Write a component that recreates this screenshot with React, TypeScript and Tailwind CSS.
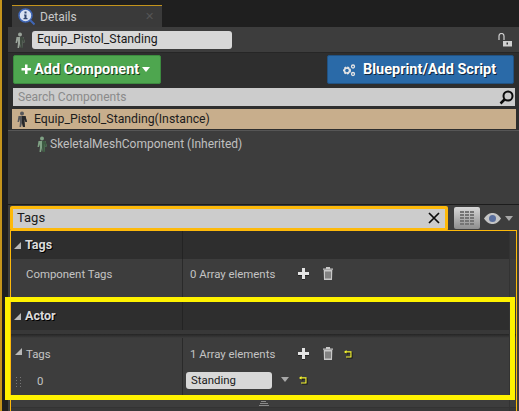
import React from 'react';

const font = { fontFamily: 'Roboto, "Liberation Sans", sans-serif' };

const Mannequin = ({ color = '#9aa39a', dark = '#3f4a40' }: { color?: string; dark?: string }) => (
  <svg width="14" height="16" viewBox="0 0 14 16">
    <circle cx="7" cy="2.5" r="2" fill={color} />
    <path d="M3.5 5h7l1.5 6h-1.5l-1-3v3l.5 5H8l-1-4-1 4H4.500l.5-5V8l-1 3H2.500z" fill={color} />
    <path d="M7 5h3.500l1.500 6h-1.500l-1-3v3l.5 5H8l-1-4z" fill={dark} />
  </svg>
);

const Plus = () => (
  <svg width="11" height="11" viewBox="0 0 11 11" className="drop-shadow-[0_1px_0_#222]">
    <path d="M4 0h3v4h4v3H7v4H4V7H0V4h4z" fill="#e4e4e4" />
  </svg>
);

const Trash = () => (
  <svg width="10" height="13" viewBox="0 0 10 13">
    <path d="M0 1.500h10v1.200H0zM3 0h4v1.500H3z" fill="#c8c8c8" />
    <path d="M.7 3h8.600L9 13H1zM2.500 4.500v7h1v-7zm2 0v7h1v-7zm2 0v7h1v-7z" fill="#c8c8c8" fillRule="evenodd" />
  </svg>
);

const Reset = () => (
  <svg width="8" height="8" viewBox="0 0 8 8" className="drop-shadow-[1px_1px_0_#111]">
    <path d="M2.500 0v3.800L0 1.900zM2.500 1.300H7.500V7.500H2V6.400h4.400V2.400H2.500z" fill="#f7f72e" />
  </svg>
);

const Caret = ({ color = '#a8a8a8', w = 8 }: { color?: string; w?: number }) => (
  <svg width={w} height="5" viewBox="0 0 8 5">
    <path d="M0 0h8L4 5z" fill={color} />
  </svg>
);

const Corner = () => (
  <svg width="7" height="7" viewBox="0 0 7 7">
    <path d="M7 0v7H0z" fill="#b8b8b8" />
  </svg>
);

const Category = ({ title }: { title: string }) => (
  <div className="flex h-[28px] shrink-0 bg-[#2e2e2e]">
    <div className="flex w-[172px] items-center gap-[4px] border-r border-[#232323] pl-[3px]">
      <Corner />
      <span className="text-[12.500px] font-bold text-[#dcdcdc] [text-shadow:1px_1px_0_#000]">{title}</span>
    </div>
    <div className="ml-auto w-[7px] bg-[#383838]" />
  </div>
);

export default function App() {
  return (
    <div style={font} className="relative flex h-[411px] w-[519px] flex-col overflow-hidden border-l-2 border-[#c4941c] bg-[#1f1f1f]">
      {/* Tab strip */}
      <div className="flex h-[27px] shrink-0 items-end pl-[10px]">
        <div className="flex h-[22px] w-[150px] items-center border-t border-[#c4941c] bg-[#3a3a3a] pl-[6px]">
          <svg width="17" height="18" viewBox="0 0 17 18">
            <circle cx="7.500" cy="7.500" r="6.500" fill="#d8e2f2" stroke="#3f66b5" strokeWidth="1.500" />
            <path d="M12 12l4.500 4.500" stroke="#3f66b5" strokeWidth="2" />
            <path d="M6.500 3.500h2v2h-2zM6 6.500h2.500V10h1v1.200h-4V10h1V7.500H6z" fill="#30466f" />
          </svg>
          <span className="ml-[5px] text-[12px] text-[#c8c8c8]">Details</span>
          <span className="ml-auto mr-[8px] text-[11px] leading-none text-[#555]">✕</span>
        </div>
      </div>

      <div className="ml-[6px] flex min-h-0 flex-1 flex-col bg-[#3d3d3d]">
        {/* Name row */}
        <div className="flex h-[25px] shrink-0 items-center pl-[5px] pr-[7px]">
          <Mannequin />
          <div className="ml-[5px] flex h-[18px] w-[200px] items-center rounded-[3px] bg-[#d8d8d8] pl-[5px] text-[12.250px] text-[#1a1a1a]">
            Equip_Pistol_Standing
          </div>
          <svg className="ml-auto" width="14" height="14" viewBox="0 0 14 14">
            <path d="M1 7V3a2.500 2.500 0 0 1 5 0v4" fill="none" stroke="#d0d0d0" strokeWidth="1.200" />
            <path d="M5 8h9v5.500H5z" fill="#d0d0d0" />
            <path d="M8.500 9.500h1.500v2H8.500z" fill="#333" />
          </svg>
        </div>

        {/* Components panel */}
        <div className="flex h-[78px] shrink-0 flex-col border-t border-[#262626] bg-[#2e2e2e] pl-[5px] pr-[4px] pt-[2px]">
          <div className="flex h-[29px] justify-between pr-[1px]">
            <div className="flex w-[148px] items-center rounded-[2px] border border-[#3c8a3f] bg-[#4ea64f] pl-[7px] text-[14.500px] font-bold text-white [text-shadow:1px_1px_0_#1c3c1c]">
              <svg width="11" height="11" viewBox="0 0 11 11">
                <path d="M4 .5h2.500V4H10v2.500H6.500V10H4V6.500H.5V4H4z" fill="#fff" />
              </svg>
              <span className="ml-[2px]">Add Component</span>
              <span className="ml-[3px]"><Caret color="#fff" /></span>
            </div>
            <div className="flex w-[187px] items-center rounded-[2px] border border-[#215282] bg-[#2a6aa8] pl-[14px] text-[14.500px] font-bold text-white [text-shadow:1px_1px_0_#10263c]">
              <svg width="14" height="14" viewBox="0 0 14 14">
                <circle cx="5" cy="7.500" r="3" fill="none" stroke="#e4e4e4" strokeWidth="2" strokeDasharray="1.800 1" />
                <circle cx="5" cy="7.500" r="2.500" fill="none" stroke="#e4e4e4" strokeWidth="1.400" />
                <circle cx="11" cy="3.500" r="1.500" fill="none" stroke="#e4e4e4" strokeWidth="1.300" />
                <circle cx="11" cy="11" r="1.500" fill="none" stroke="#e4e4e4" strokeWidth="1.300" />
              </svg>
              <span className="ml-[7px]">Blueprint/Add Script</span>
            </div>
          </div>
          <div className="mt-[4px] flex h-[18px] items-center justify-between bg-[#cccccc] pl-[5px] pr-[1px] text-[12px] text-[#8a8a8a]">
            <span>Search Components</span>
            <svg width="15" height="15" viewBox="0 0 15 15">
              <circle cx="9" cy="6" r="4.500" fill="none" stroke="#0c0c0c" strokeWidth="2" />
              <path d="M5.500 9.500L1.500 13.500" stroke="#0c0c0c" strokeWidth="2.500" />
            </svg>
          </div>
          <div className="-ml-[1px] -mr-[1px] mt-[3px] flex h-[20px] items-center bg-[#c8ae8c] pl-[3px] text-[12.250px] text-[#1c1c1c]">
            <Mannequin color="#55565a" dark="#26272a" />
            <span className="ml-[5px]">Equip_Pistol_Standing(Instance)</span>
          </div>
        </div>

        {/* Component tree */}
        <div className="h-[74px] shrink-0 border-t border-[#565656] pl-[27px] pt-[4px]">
          <div className="flex h-[18px] items-center text-[12px] text-[#c0c0c0]">
            <Mannequin color="#7fa184" dark="#3d5a42" />
            <span className="ml-[1px]">SkeletalMeshComponent (Inherited)</span>
          </div>
        </div>

        {/* Filter row */}
        <div className="flex h-[27px] shrink-0 items-center border-t border-[#1c1c1c] pl-[2px]">
          <div className="relative flex h-[25px] w-[438px] items-center justify-between rounded-[2px] border-[3px] border-[#fdb90a] bg-[#cccccc] pl-[4px] pr-[5px] text-[13px] text-[#1a1a1a]">
            <span>Tags</span>
            <svg width="12" height="12" viewBox="0 0 12 12">
              <path d="M1 1l10 10M11 1L1 11" stroke="#0c0c0c" strokeWidth="1.700" />
            </svg>
          </div>
          <div className="ml-[6px] grid h-[22px] w-[26px] place-items-center rounded-[2px] bg-gradient-to-b from-[#d8d8d8] to-[#8e8e8e]">
            <div className="grid w-[14px] grid-cols-3 gap-[1px]">
              {Array.from({ length: 15 }).map((_, i) => (
                <span key={i} className="h-[2px] bg-[#757575]" />
              ))}
            </div>
          </div>
          <svg className="ml-[4px]" width="17" height="11" viewBox="0 0 17 11">
            <path d="M0 5.500C3 1 6 0 8.500 0S14 1 17 5.500C14 10 11 11 8.500 11S3 10 0 5.500z" fill="#c4c4c4" />
            <circle cx="8.500" cy="5.500" r="3.500" fill="#5a6f9e" />
          </svg>
          <span className="ml-[4px]"><Caret /></span>
        </div>

        {/* Details panel */}
        <div className="relative -mt-[1px] ml-[2px] mr-[2px] flex min-h-0 flex-1 flex-col border border-b-0 border-[#fdb90a]">
          <Category title="Tags" />
          <div className="flex h-[38px] shrink-0 text-[11.400px] text-[#c4c4c4]">
            <div className="w-[172px] border-r border-[#2a2a2a] pl-[15px] pt-[7px]">Component Tags</div>
            <div className="flex items-start pl-[7px] pt-[7px]">
              <span className="w-[108px]">0 Array elements</span>
              <span className="mt-[1px] flex items-center gap-[14px]"><Plus /><Trash /></span>
            </div>
          </div>
          <div className="h-[5px] shrink-0" />
          <Category title="Actor" />
          <div className="h-[4px] shrink-0 bg-[#383838]" />
          <div className="h-[4px] shrink-0 bg-gradient-to-b from-[#252525] to-[#3d3d3d]" />
          <div className="flex h-[33px] shrink-0 text-[11.400px] text-[#c4c4c4]">
            <div className="flex w-[172px] gap-[4px] border-r border-[#2a2a2a] pl-[4px] pt-[8px]">
              <span className="mt-[2px]"><Corner /></span>
              <span>Tags</span>
            </div>
            <div className="flex items-start pl-[7px] pt-[8px]">
              <span className="w-[108px]">1 Array elements</span>
              <span className="mt-[1px] flex items-center gap-[14px]"><Plus /><Trash /><span className="-ml-[3px]"><Reset /></span></span>
            </div>
          </div>
          <div className="flex h-[24px] shrink-0 text-[11.400px] text-[#c4c4c4]">
            <div className="flex w-[172px] items-center border-r border-[#2a2a2a] pb-[3px] pl-[5px]">
              <div className="grid grid-cols-2 gap-x-[3px] gap-y-[2px]">
                {Array.from({ length: 8 }).map((_, i) => (
                  <span key={i} className="h-[1px] w-[1px] bg-[#777]" />
                ))}
              </div>
              <span className="ml-[16px]">0</span>
            </div>
            <div className="flex items-start pl-[3px] pt-[1px]">
              <div className="flex h-[17px] w-[86px] items-center rounded-[3px] bg-[#d8d8d8] pl-[5px] text-[#1a1a1a]">Standing</div>
              <span className="ml-[9px] mt-[5px]"><Caret /></span>
              <span className="ml-[10px] mt-[4px]"><Reset /></span>
            </div>
          </div>
          <div className="h-[6px] shrink-0" />
          <div className="flex h-[7px] shrink-0 justify-center border-b border-[#333]">
            <div className="flex w-[10px] flex-col items-center gap-[1px]">
              <span className="h-[1px] w-[5px] bg-[#8a8a8a]" />
              <span className="h-[1px] w-[8px] bg-[#8a8a8a]" />
              <span className="h-[1px] w-[10px] bg-[#8a8a8a]" />
            </div>
          </div>
          <div className="flex-1 bg-[#383838]" />
          {/* faint scrollbar gutter line */}
          <div className="pointer-events-none absolute bottom-0 right-[6px] top-0 w-[1px] bg-[#333]" />
        </div>
      </div>

      {/* Yellow highlight drawn over the Actor section */}
      <div className="pointer-events-none absolute left-[3px] top-[297px] h-[103px] w-[510px] border-[5px] border-[#fff200]" />
    </div>
  );
}
